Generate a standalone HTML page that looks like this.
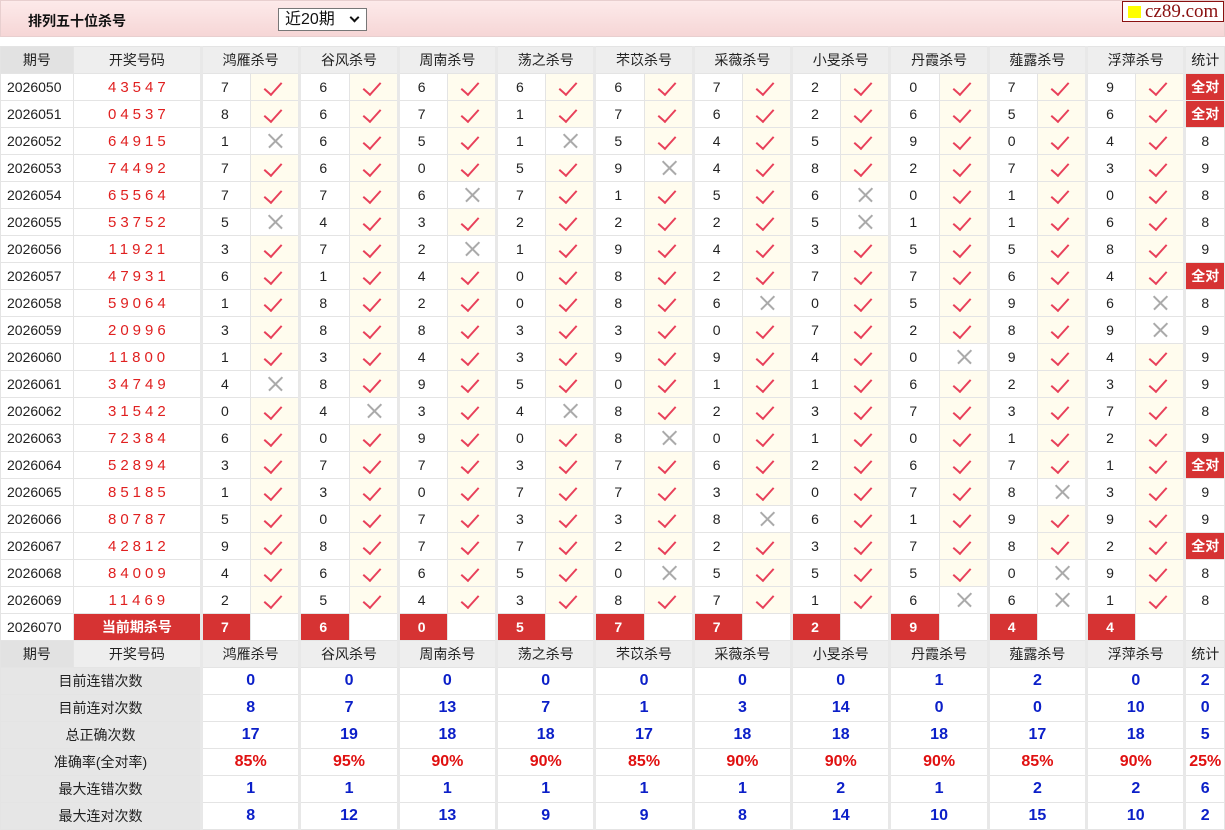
<!DOCTYPE html>
<html><head><meta charset="utf-8">
<style>
*{margin:0;padding:0;box-sizing:border-box}
body{width:1225px;height:830px;overflow:hidden;background:#fff;font-family:"Liberation Sans","Noto Sans CJK SC",sans-serif;font-size:14px;color:#222}
.top{position:absolute;left:0;top:0;width:1225px;height:37px;background:linear-gradient(#fdeaea,#f6d6d6);border:1px solid #e8cfcf}
.title{position:absolute;left:27px;top:10px;font-weight:bold;font-size:14px;color:#111}
.sel{position:absolute;left:277px;top:7px;width:89px;height:23px;border:1px solid #777;background:#fff;font-size:16px;line-height:19px;padding:1px 0 0 6px;color:#111}
.sel span{position:absolute;right:8px;top:5px;width:7px;height:7px;border-right:2px solid #111;border-bottom:2px solid #111;transform:rotate(45deg)}
.logo{position:absolute;left:1121px;top:0;width:102px;height:21px;border:1px solid #8a1010;background:#fff;font-family:"Liberation Serif",serif;font-size:19px;color:#8a1010;line-height:19px;padding-left:22px}
.logo i{position:absolute;left:5px;top:4px;width:13px;height:12px;background:#ff0}
table{position:absolute;left:0;top:46px;border-collapse:collapse;table-layout:fixed;width:1225px}
td{height:27px;border:1px solid #e4e4e4;text-align:center;padding:0;white-space:nowrap;overflow:hidden}
tr.h td{background:#eee;color:#222}
tr.h td.p{background:#e2e2e2}
td.p{text-align:left;padding-left:6px}
td.n{text-align:left;padding-left:18px;border-left:3px solid #e8e8e8}
td.k{color:#e02020;letter-spacing:4px;font-size:15px;padding-left:4px}
td.y{background:#fffcee;position:relative}
td.y::after{content:"";position:absolute;left:17px;top:4px;width:8px;height:15px;border-right:2px solid #e8405a;border-bottom:2px solid #e8405a;transform:rotate(42deg)}
td.x{position:relative}
td.x::before,td.x::after{content:"";position:absolute;left:15px;top:12px;width:19px;height:1.5px;background:#aaa;transform:rotate(45deg)}
td.x::after{transform:rotate(-45deg)}
td.s{border-left:3px solid #e8e8e8}
td.q{background:#d63333;color:#fff;font-weight:bold}
td.cur{background:#d63333;color:#fff;font-weight:bold;text-align:left;padding-left:18px;border-left:3px solid #e8e8e8}
td.lab{background:#e6e6e6;text-align:center}
td.b{color:#0b1fc8;font-weight:bold;font-size:16px;border-left:3px solid #e8e8e8}
td.r{color:#e01010;font-weight:bold;font-size:16px;border-left:3px solid #e8e8e8}
</style></head><body>
<div class="top"><div class="title">排列五十位杀号</div><div class="sel">近20期<span></span></div><div class="logo"><i></i>cz89.com</div></div>
<table>
<colgroup><col style="width:72px"><col style="width:127px"><col span="20" style="width:48.7px"><col style="width:39px"></colgroup>
<tr class="h"><td class="p" style="text-align:center;padding:0">期号</td><td>开奖号码</td><td colspan="2" class="s">鸿雁杀号</td><td colspan="2" class="s">谷风杀号</td><td colspan="2" class="s">周南杀号</td><td colspan="2" class="s">荡之杀号</td><td colspan="2" class="s">芣苡杀号</td><td colspan="2" class="s">采薇杀号</td><td colspan="2" class="s">小旻杀号</td><td colspan="2" class="s">丹霞杀号</td><td colspan="2" class="s">薤露杀号</td><td colspan="2" class="s">浮萍杀号</td><td class="s">统计</td></tr>
<tr><td class="p">2026050</td><td class="k">43547</td><td class="n">7</td><td class="y"></td><td class="n">6</td><td class="y"></td><td class="n">6</td><td class="y"></td><td class="n">6</td><td class="y"></td><td class="n">6</td><td class="y"></td><td class="n">7</td><td class="y"></td><td class="n">2</td><td class="y"></td><td class="n">0</td><td class="y"></td><td class="n">7</td><td class="y"></td><td class="n">9</td><td class="y"></td><td class="q s">全对</td></tr>
<tr><td class="p">2026051</td><td class="k">04537</td><td class="n">8</td><td class="y"></td><td class="n">6</td><td class="y"></td><td class="n">7</td><td class="y"></td><td class="n">1</td><td class="y"></td><td class="n">7</td><td class="y"></td><td class="n">6</td><td class="y"></td><td class="n">2</td><td class="y"></td><td class="n">6</td><td class="y"></td><td class="n">5</td><td class="y"></td><td class="n">6</td><td class="y"></td><td class="q s">全对</td></tr>
<tr><td class="p">2026052</td><td class="k">64915</td><td class="n">1</td><td class="x"></td><td class="n">6</td><td class="y"></td><td class="n">5</td><td class="y"></td><td class="n">1</td><td class="x"></td><td class="n">5</td><td class="y"></td><td class="n">4</td><td class="y"></td><td class="n">5</td><td class="y"></td><td class="n">9</td><td class="y"></td><td class="n">0</td><td class="y"></td><td class="n">4</td><td class="y"></td><td class="s">8</td></tr>
<tr><td class="p">2026053</td><td class="k">74492</td><td class="n">7</td><td class="y"></td><td class="n">6</td><td class="y"></td><td class="n">0</td><td class="y"></td><td class="n">5</td><td class="y"></td><td class="n">9</td><td class="x"></td><td class="n">4</td><td class="y"></td><td class="n">8</td><td class="y"></td><td class="n">2</td><td class="y"></td><td class="n">7</td><td class="y"></td><td class="n">3</td><td class="y"></td><td class="s">9</td></tr>
<tr><td class="p">2026054</td><td class="k">65564</td><td class="n">7</td><td class="y"></td><td class="n">7</td><td class="y"></td><td class="n">6</td><td class="x"></td><td class="n">7</td><td class="y"></td><td class="n">1</td><td class="y"></td><td class="n">5</td><td class="y"></td><td class="n">6</td><td class="x"></td><td class="n">0</td><td class="y"></td><td class="n">1</td><td class="y"></td><td class="n">0</td><td class="y"></td><td class="s">8</td></tr>
<tr><td class="p">2026055</td><td class="k">53752</td><td class="n">5</td><td class="x"></td><td class="n">4</td><td class="y"></td><td class="n">3</td><td class="y"></td><td class="n">2</td><td class="y"></td><td class="n">2</td><td class="y"></td><td class="n">2</td><td class="y"></td><td class="n">5</td><td class="x"></td><td class="n">1</td><td class="y"></td><td class="n">1</td><td class="y"></td><td class="n">6</td><td class="y"></td><td class="s">8</td></tr>
<tr><td class="p">2026056</td><td class="k">11921</td><td class="n">3</td><td class="y"></td><td class="n">7</td><td class="y"></td><td class="n">2</td><td class="x"></td><td class="n">1</td><td class="y"></td><td class="n">9</td><td class="y"></td><td class="n">4</td><td class="y"></td><td class="n">3</td><td class="y"></td><td class="n">5</td><td class="y"></td><td class="n">5</td><td class="y"></td><td class="n">8</td><td class="y"></td><td class="s">9</td></tr>
<tr><td class="p">2026057</td><td class="k">47931</td><td class="n">6</td><td class="y"></td><td class="n">1</td><td class="y"></td><td class="n">4</td><td class="y"></td><td class="n">0</td><td class="y"></td><td class="n">8</td><td class="y"></td><td class="n">2</td><td class="y"></td><td class="n">7</td><td class="y"></td><td class="n">7</td><td class="y"></td><td class="n">6</td><td class="y"></td><td class="n">4</td><td class="y"></td><td class="q s">全对</td></tr>
<tr><td class="p">2026058</td><td class="k">59064</td><td class="n">1</td><td class="y"></td><td class="n">8</td><td class="y"></td><td class="n">2</td><td class="y"></td><td class="n">0</td><td class="y"></td><td class="n">8</td><td class="y"></td><td class="n">6</td><td class="x"></td><td class="n">0</td><td class="y"></td><td class="n">5</td><td class="y"></td><td class="n">9</td><td class="y"></td><td class="n">6</td><td class="x"></td><td class="s">8</td></tr>
<tr><td class="p">2026059</td><td class="k">20996</td><td class="n">3</td><td class="y"></td><td class="n">8</td><td class="y"></td><td class="n">8</td><td class="y"></td><td class="n">3</td><td class="y"></td><td class="n">3</td><td class="y"></td><td class="n">0</td><td class="y"></td><td class="n">7</td><td class="y"></td><td class="n">2</td><td class="y"></td><td class="n">8</td><td class="y"></td><td class="n">9</td><td class="x"></td><td class="s">9</td></tr>
<tr><td class="p">2026060</td><td class="k">11800</td><td class="n">1</td><td class="y"></td><td class="n">3</td><td class="y"></td><td class="n">4</td><td class="y"></td><td class="n">3</td><td class="y"></td><td class="n">9</td><td class="y"></td><td class="n">9</td><td class="y"></td><td class="n">4</td><td class="y"></td><td class="n">0</td><td class="x"></td><td class="n">9</td><td class="y"></td><td class="n">4</td><td class="y"></td><td class="s">9</td></tr>
<tr><td class="p">2026061</td><td class="k">34749</td><td class="n">4</td><td class="x"></td><td class="n">8</td><td class="y"></td><td class="n">9</td><td class="y"></td><td class="n">5</td><td class="y"></td><td class="n">0</td><td class="y"></td><td class="n">1</td><td class="y"></td><td class="n">1</td><td class="y"></td><td class="n">6</td><td class="y"></td><td class="n">2</td><td class="y"></td><td class="n">3</td><td class="y"></td><td class="s">9</td></tr>
<tr><td class="p">2026062</td><td class="k">31542</td><td class="n">0</td><td class="y"></td><td class="n">4</td><td class="x"></td><td class="n">3</td><td class="y"></td><td class="n">4</td><td class="x"></td><td class="n">8</td><td class="y"></td><td class="n">2</td><td class="y"></td><td class="n">3</td><td class="y"></td><td class="n">7</td><td class="y"></td><td class="n">3</td><td class="y"></td><td class="n">7</td><td class="y"></td><td class="s">8</td></tr>
<tr><td class="p">2026063</td><td class="k">72384</td><td class="n">6</td><td class="y"></td><td class="n">0</td><td class="y"></td><td class="n">9</td><td class="y"></td><td class="n">0</td><td class="y"></td><td class="n">8</td><td class="x"></td><td class="n">0</td><td class="y"></td><td class="n">1</td><td class="y"></td><td class="n">0</td><td class="y"></td><td class="n">1</td><td class="y"></td><td class="n">2</td><td class="y"></td><td class="s">9</td></tr>
<tr><td class="p">2026064</td><td class="k">52894</td><td class="n">3</td><td class="y"></td><td class="n">7</td><td class="y"></td><td class="n">7</td><td class="y"></td><td class="n">3</td><td class="y"></td><td class="n">7</td><td class="y"></td><td class="n">6</td><td class="y"></td><td class="n">2</td><td class="y"></td><td class="n">6</td><td class="y"></td><td class="n">7</td><td class="y"></td><td class="n">1</td><td class="y"></td><td class="q s">全对</td></tr>
<tr><td class="p">2026065</td><td class="k">85185</td><td class="n">1</td><td class="y"></td><td class="n">3</td><td class="y"></td><td class="n">0</td><td class="y"></td><td class="n">7</td><td class="y"></td><td class="n">7</td><td class="y"></td><td class="n">3</td><td class="y"></td><td class="n">0</td><td class="y"></td><td class="n">7</td><td class="y"></td><td class="n">8</td><td class="x"></td><td class="n">3</td><td class="y"></td><td class="s">9</td></tr>
<tr><td class="p">2026066</td><td class="k">80787</td><td class="n">5</td><td class="y"></td><td class="n">0</td><td class="y"></td><td class="n">7</td><td class="y"></td><td class="n">3</td><td class="y"></td><td class="n">3</td><td class="y"></td><td class="n">8</td><td class="x"></td><td class="n">6</td><td class="y"></td><td class="n">1</td><td class="y"></td><td class="n">9</td><td class="y"></td><td class="n">9</td><td class="y"></td><td class="s">9</td></tr>
<tr><td class="p">2026067</td><td class="k">42812</td><td class="n">9</td><td class="y"></td><td class="n">8</td><td class="y"></td><td class="n">7</td><td class="y"></td><td class="n">7</td><td class="y"></td><td class="n">2</td><td class="y"></td><td class="n">2</td><td class="y"></td><td class="n">3</td><td class="y"></td><td class="n">7</td><td class="y"></td><td class="n">8</td><td class="y"></td><td class="n">2</td><td class="y"></td><td class="q s">全对</td></tr>
<tr><td class="p">2026068</td><td class="k">84009</td><td class="n">4</td><td class="y"></td><td class="n">6</td><td class="y"></td><td class="n">6</td><td class="y"></td><td class="n">5</td><td class="y"></td><td class="n">0</td><td class="x"></td><td class="n">5</td><td class="y"></td><td class="n">5</td><td class="y"></td><td class="n">5</td><td class="y"></td><td class="n">0</td><td class="x"></td><td class="n">9</td><td class="y"></td><td class="s">8</td></tr>
<tr><td class="p">2026069</td><td class="k">11469</td><td class="n">2</td><td class="y"></td><td class="n">5</td><td class="y"></td><td class="n">4</td><td class="y"></td><td class="n">3</td><td class="y"></td><td class="n">8</td><td class="y"></td><td class="n">7</td><td class="y"></td><td class="n">1</td><td class="y"></td><td class="n">6</td><td class="x"></td><td class="n">6</td><td class="x"></td><td class="n">1</td><td class="y"></td><td class="s">8</td></tr>
<tr><td class="p">2026070</td><td class="q">当前期杀号</td><td class="cur">7</td><td></td><td class="cur">6</td><td></td><td class="cur">0</td><td></td><td class="cur">5</td><td></td><td class="cur">7</td><td></td><td class="cur">7</td><td></td><td class="cur">2</td><td></td><td class="cur">9</td><td></td><td class="cur">4</td><td></td><td class="cur">4</td><td></td><td class="s"></td></tr>
<tr class="h"><td class="p" style="text-align:center;padding:0">期号</td><td>开奖号码</td><td colspan="2" class="s">鸿雁杀号</td><td colspan="2" class="s">谷风杀号</td><td colspan="2" class="s">周南杀号</td><td colspan="2" class="s">荡之杀号</td><td colspan="2" class="s">芣苡杀号</td><td colspan="2" class="s">采薇杀号</td><td colspan="2" class="s">小旻杀号</td><td colspan="2" class="s">丹霞杀号</td><td colspan="2" class="s">薤露杀号</td><td colspan="2" class="s">浮萍杀号</td><td class="s">统计</td></tr>
<tr><td colspan="2" class="lab">目前连错次数</td><td colspan="2" class="b">0</td><td colspan="2" class="b">0</td><td colspan="2" class="b">0</td><td colspan="2" class="b">0</td><td colspan="2" class="b">0</td><td colspan="2" class="b">0</td><td colspan="2" class="b">0</td><td colspan="2" class="b">1</td><td colspan="2" class="b">2</td><td colspan="2" class="b">0</td><td class="b">2</td></tr>
<tr><td colspan="2" class="lab">目前连对次数</td><td colspan="2" class="b">8</td><td colspan="2" class="b">7</td><td colspan="2" class="b">13</td><td colspan="2" class="b">7</td><td colspan="2" class="b">1</td><td colspan="2" class="b">3</td><td colspan="2" class="b">14</td><td colspan="2" class="b">0</td><td colspan="2" class="b">0</td><td colspan="2" class="b">10</td><td class="b">0</td></tr>
<tr><td colspan="2" class="lab">总正确次数</td><td colspan="2" class="b">17</td><td colspan="2" class="b">19</td><td colspan="2" class="b">18</td><td colspan="2" class="b">18</td><td colspan="2" class="b">17</td><td colspan="2" class="b">18</td><td colspan="2" class="b">18</td><td colspan="2" class="b">18</td><td colspan="2" class="b">17</td><td colspan="2" class="b">18</td><td class="b">5</td></tr>
<tr><td colspan="2" class="lab">准确率(全对率)</td><td colspan="2" class="r">85%</td><td colspan="2" class="r">95%</td><td colspan="2" class="r">90%</td><td colspan="2" class="r">90%</td><td colspan="2" class="r">85%</td><td colspan="2" class="r">90%</td><td colspan="2" class="r">90%</td><td colspan="2" class="r">90%</td><td colspan="2" class="r">85%</td><td colspan="2" class="r">90%</td><td class="r">25%</td></tr>
<tr><td colspan="2" class="lab">最大连错次数</td><td colspan="2" class="b">1</td><td colspan="2" class="b">1</td><td colspan="2" class="b">1</td><td colspan="2" class="b">1</td><td colspan="2" class="b">1</td><td colspan="2" class="b">1</td><td colspan="2" class="b">2</td><td colspan="2" class="b">1</td><td colspan="2" class="b">2</td><td colspan="2" class="b">2</td><td class="b">6</td></tr>
<tr><td colspan="2" class="lab">最大连对次数</td><td colspan="2" class="b">8</td><td colspan="2" class="b">12</td><td colspan="2" class="b">13</td><td colspan="2" class="b">9</td><td colspan="2" class="b">9</td><td colspan="2" class="b">8</td><td colspan="2" class="b">14</td><td colspan="2" class="b">10</td><td colspan="2" class="b">15</td><td colspan="2" class="b">10</td><td class="b">2</td></tr>
</table>
</body></html>
